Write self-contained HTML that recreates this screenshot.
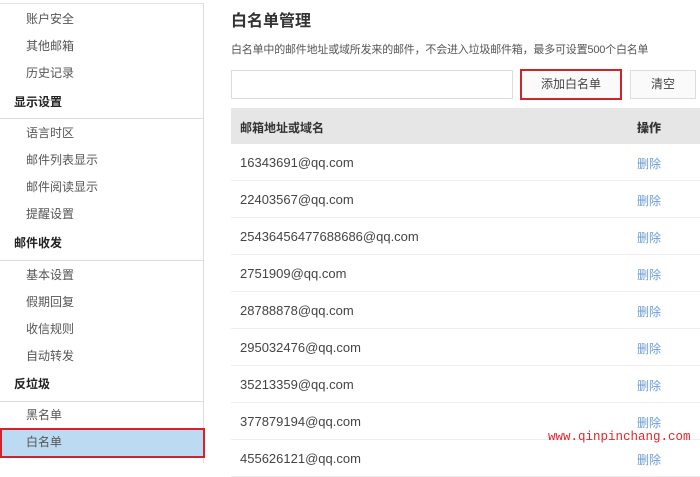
<!DOCTYPE html>
<html><head><meta charset="utf-8"><style>
*{margin:0;padding:0;box-sizing:border-box}
body{width:700px;height:460px;overflow:hidden;background:#fff;font-family:"Liberation Sans","Noto Sans CJK SC",sans-serif;color:#333;position:relative}
.side{position:absolute;left:0;top:3px;width:204px;height:460px;border-right:1px solid #ddd;border-top:1px solid #e5e5e5}
.it{position:absolute;left:26px;font-size:12px;color:#555;line-height:16px}
.hd{position:absolute;left:14px;font-size:12px;font-weight:bold;color:#222;line-height:16px}
.ln{position:absolute;left:0;width:204px;height:1px;background:#ddd}
.sel{position:absolute;left:0;top:428px;width:205px;height:30px;background:#bcdaf2;border:2px solid #d0242a}
.t{position:absolute;font-size:16px;font-weight:bold;left:231px;top:7px;color:#333}
.d{position:absolute;left:231px;top:41px;font-size:11px;color:#555;letter-spacing:-0.2px}
.in{position:absolute;left:231px;top:70px;width:282px;height:29px;border:1px solid #ddd}
.b1{position:absolute;left:520px;top:69px;width:102px;height:31px;border:2px solid #d0242a;font-size:12px;text-align:center;line-height:27px;color:#444;background:#fafafa}
.b2{position:absolute;left:630px;top:70px;width:66px;height:29px;border:1px solid #ddd;font-size:12px;text-align:center;line-height:27px;color:#444;background:#fafafa}
.th{position:absolute;left:231px;top:108px;width:469px;height:36px;background:#e6e6e6;font-size:12px;font-weight:bold}
.r{position:absolute;left:231px;width:469px;height:37px;border-bottom:1px solid #eee;font-size:12px;color:#444}
.r span{position:absolute;left:9px;top:11px;font-size:13px}
.th span{position:absolute;left:9px;top:11px}
.r b,.th b{position:absolute;left:406px;top:11px}
.r b{font-weight:normal;color:#6b9dd4}
.wm{position:absolute;left:548px;top:430px;font-family:"Liberation Mono",monospace;font-size:12.5px;color:#e8232b}
</style></head><body>
<div class="side"></div>
<div class="it" style="top:11px">账户安全</div>
<div class="it" style="top:38px">其他邮箱</div>
<div class="it" style="top:65px">历史记录</div>
<div class="hd" style="top:94px">显示设置</div>
<div class="ln" style="top:118px"></div>
<div class="it" style="top:125px">语言时区</div>
<div class="it" style="top:152px">邮件列表显示</div>
<div class="it" style="top:179px">邮件阅读显示</div>
<div class="it" style="top:206px">提醒设置</div>
<div class="hd" style="top:235px">邮件收发</div>
<div class="ln" style="top:260px"></div>
<div class="it" style="top:267px">基本设置</div>
<div class="it" style="top:294px">假期回复</div>
<div class="it" style="top:321px">收信规则</div>
<div class="it" style="top:348px">自动转发</div>
<div class="hd" style="top:376px">反垃圾</div>
<div class="ln" style="top:401px"></div>
<div class="it" style="top:407px">黑名单</div>
<div class="sel"></div>
<div class="it" style="top:434px">白名单</div>
<div class="t">白名单管理</div>
<div class="d">白名单中的邮件地址或域所发来的邮件，不会进入垃圾邮件箱，最多可设置500个白名单</div>
<div class="in"></div>
<div class="b1">添加白名单</div>
<div class="b2">清空</div>
<div class="th"><span>邮箱地址或域名</span><b>操作</b></div>
<div class="r" style="top:144px"><span>16343691@qq.com</span><b>删除</b></div>
<div class="r" style="top:181px"><span>22403567@qq.com</span><b>删除</b></div>
<div class="r" style="top:218px"><span>25436456477688686@qq.com</span><b>删除</b></div>
<div class="r" style="top:255px"><span>2751909@qq.com</span><b>删除</b></div>
<div class="r" style="top:292px"><span>28788878@qq.com</span><b>删除</b></div>
<div class="r" style="top:329px"><span>295032476@qq.com</span><b>删除</b></div>
<div class="r" style="top:366px"><span>35213359@qq.com</span><b>删除</b></div>
<div class="r" style="top:403px"><span>377879194@qq.com</span><b>删除</b></div>
<div class="r" style="top:440px"><span>455626121@qq.com</span><b>删除</b></div>
<div class="wm">www.qinpinchang.com</div>
</body></html>
